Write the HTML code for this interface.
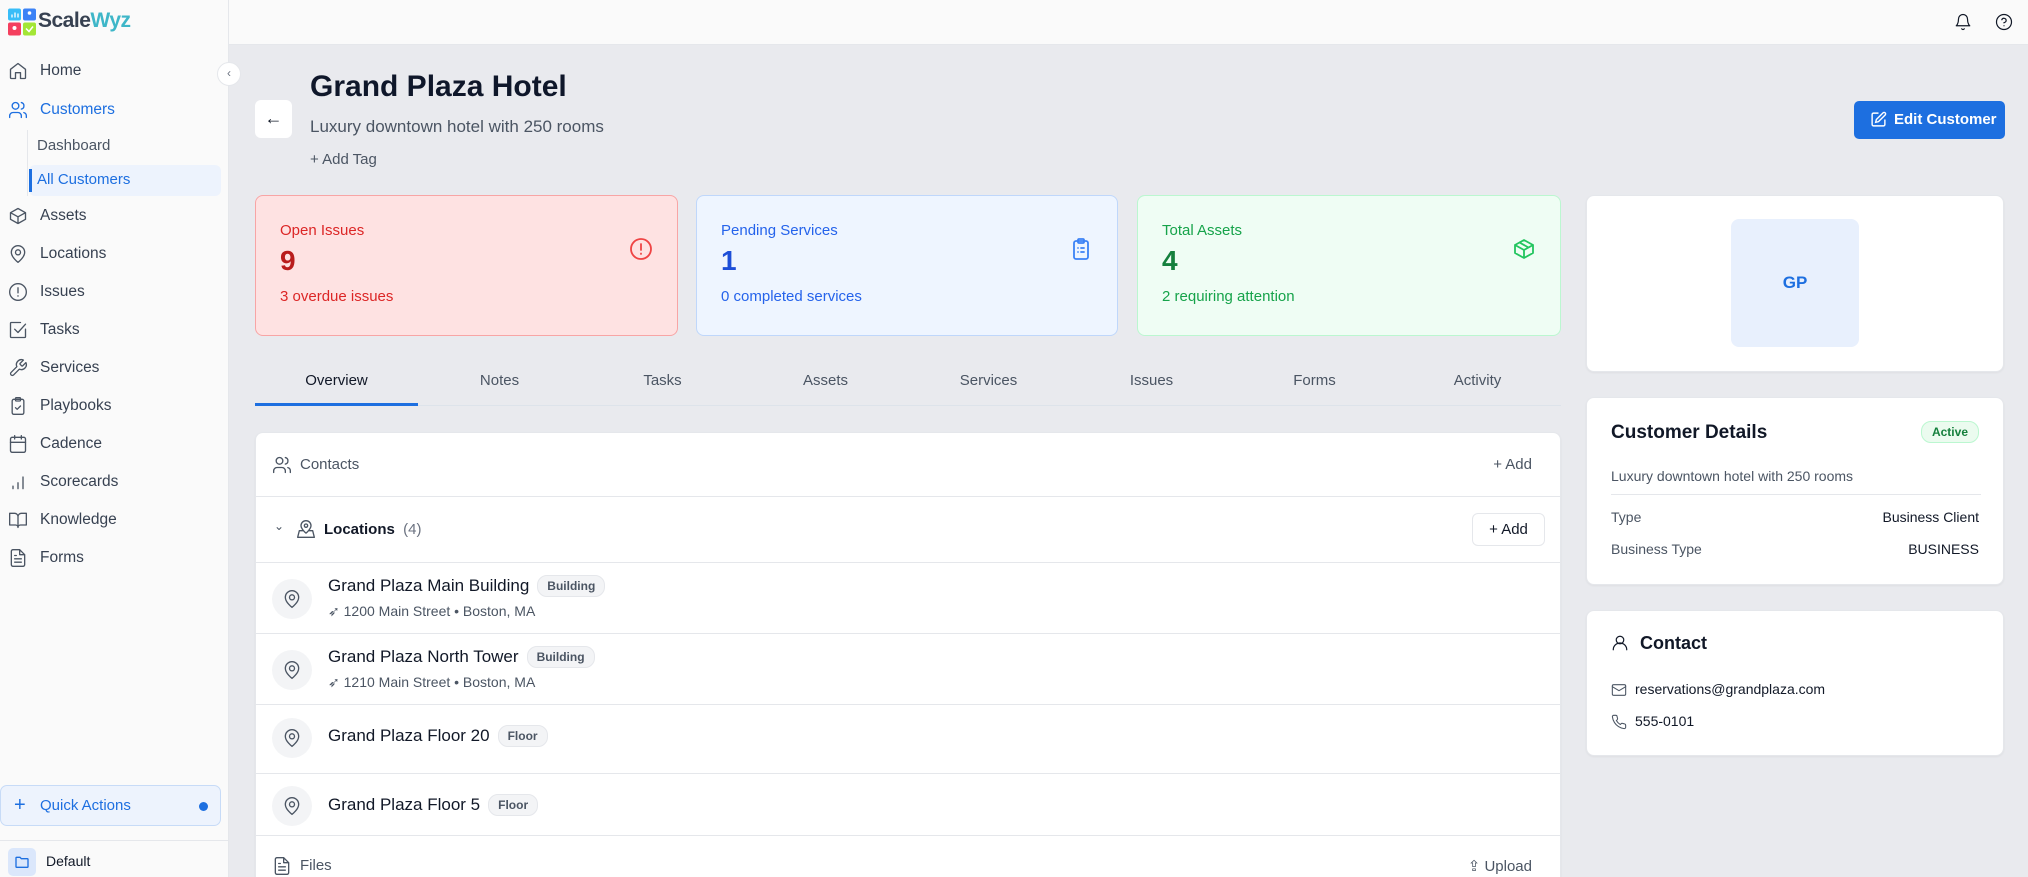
<!DOCTYPE html>
<html style="overflow:hidden;width:2028px;height:877px"><head><meta charset="utf-8"><style>
*{box-sizing:border-box;margin:0;padding:0}
body{width:2028px;height:877px;overflow:hidden;background:#e9eaee;font-family:"Liberation Sans",sans-serif;position:relative;color:#111827}
.a{position:absolute}
.sb{left:0;top:0;width:229px;height:877px;background:#fafafa;border-right:1px solid #e5e7eb}
.nav{position:absolute;left:8px;display:flex;align-items:center;font-size:15.5px;color:#374151}
.nav svg{width:20px;height:20px;margin-right:12px;stroke:#4b5563;fill:none;stroke-width:1.6;stroke-linecap:round;stroke-linejoin:round}
.top{left:229px;top:0;right:0;height:45px;background:#fafafa;border-bottom:1px solid #e5e7eb}
.card{position:absolute;background:#fff;border-radius:8px;border:1px solid #e5e7eb;box-shadow:0 1px 2px rgba(0,0,0,.05)}
.stat{position:absolute;top:195px;height:141px;border-radius:8px}
.stat .l{position:absolute;left:24px;top:26px;font-size:15px}
.stat .n{position:absolute;left:24px;top:49px;font-size:28px;font-weight:bold}
.stat .s{position:absolute;left:24px;top:92px;font-size:15px}
.stat svg{position:absolute;right:24px;top:41px;width:24px;height:24px;fill:none;stroke-width:1.8;stroke-linecap:round;stroke-linejoin:round}
.tab{position:absolute;top:372px;width:163px;text-align:center;font-size:15px;color:#4b5563}
.row{position:absolute;left:0;right:0;border-top:1px solid #e5e7eb}
.pin{position:absolute;left:16px;width:40px;height:40px;border-radius:50%;background:#f3f4f6}
.pin svg{position:absolute;left:10px;top:10px;width:20px;height:20px;fill:none;stroke:#4b5563;stroke-width:1.6}
.nm{position:absolute;left:72px;font-size:17px;color:#111827;display:flex;align-items:center}
.bd{margin-left:8px;font-size:12px;font-weight:bold;color:#4b5563;background:#f3f4f6;border:1px solid #e5e7eb;border-radius:10px;padding:3px 9px}
.ad{position:absolute;left:72px;font-size:14px;color:#4b5563}
.ic{fill:none;stroke:#4b5563;stroke-width:1.6;stroke-linecap:round;stroke-linejoin:round}
</style></head><body>
<div class="a sb">
  <svg class="a" style="left:8px;top:8px" width="28" height="28" viewBox="0 0 28 27"><rect x="0" y="0" width="13" height="12" rx="2" fill="#38bdf8"/><rect x="15" y="0" width="13" height="12" rx="2" fill="#3b82f6"/><rect x="0" y="14" width="13" height="13" rx="2" fill="#f43f5e"/><rect x="15" y="14" width="13" height="13" rx="2" fill="#a3e635"/><path d="M4 9V6M7 9V4M10 9V5" stroke="#fff" stroke-width="1.3"/><circle cx="21.5" cy="4.5" r="1.8" fill="#fff"/><circle cx="6.5" cy="19.5" r="2" fill="#fff"/><path d="M18 20l3 3 4-5" stroke="#fff" stroke-width="1.5" fill="none"/></svg>
  <div class="a" style="left:38px;top:9px;font-size:21px;font-weight:bold;letter-spacing:-.5px"><span style="color:#374151">Scale</span><span style="color:#3eb6c8">Wyz</span></div>
  <div class="nav" style="top:61px"><svg viewBox="0 0 24 24"><path d="M3 10l9-7 9 7v10a1 1 0 0 1-1 1h-5v-7H9v7H4a1 1 0 0 1-1-1z"/></svg>Home</div>
  <div class="nav" style="top:100px;color:#1d6fe0"><svg viewBox="0 0 24 24" style="stroke:#1d6fe0"><circle cx="9" cy="7" r="4"/><path d="M2 21v-2a4 4 0 0 1 4-4h6a4 4 0 0 1 4 4v2M16 3.1a4 4 0 0 1 0 7.8M22 21v-2a4 4 0 0 0-3-3.9"/></svg>Customers</div>
  <div class="a" style="left:27px;top:130px;width:1px;height:66px;background:#e5e7eb"></div>
  <div class="a" style="left:37px;top:137px;font-size:15px;color:#4b5563">Dashboard</div>
  <div class="a" style="left:29px;top:165px;width:192px;height:31px;background:#edf3fd;border-radius:6px"></div>
  <div class="a" style="left:29px;top:169px;width:3px;height:23px;background:#1d6fe0"></div>
  <div class="a" style="left:37px;top:171px;font-size:15px;color:#1d6fe0">All Customers</div>
  <div class="nav" style="top:206px"><svg viewBox="0 0 24 24"><path d="M21 8l-9-5-9 5v8l9 5 9-5zM3 8l9 5 9-5M12 13v8"/></svg>Assets</div>
  <div class="nav" style="top:244px"><svg viewBox="0 0 24 24"><path d="M20 10c0 6-8 12-8 12s-8-6-8-12a8 8 0 0 1 16 0z"/><circle cx="12" cy="10" r="3"/></svg>Locations</div>
  <div class="nav" style="top:282px"><svg viewBox="0 0 24 24"><circle cx="12" cy="12" r="10"/><path d="M12 7v6M12 16.5v.5"/></svg>Issues</div>
  <div class="nav" style="top:320px"><svg viewBox="0 0 24 24"><path d="M21 11v9a1 1 0 0 1-1 1H4a1 1 0 0 1-1-1V4a1 1 0 0 1 1-1h11M8 11l4 4 9-10"/></svg>Tasks</div>
  <div class="nav" style="top:358px"><svg viewBox="0 0 24 24"><path d="M14.7 6.3a1 1 0 0 0 0 1.4l1.6 1.6a1 1 0 0 0 1.4 0l3.8-3.8a6 6 0 0 1-7.9 7.900l-6.9 6.9a2.1 2.1 0 0 1-3-3l6.9-6.9a6 6 0 0 1 7.9-7.9z"/></svg>Services</div>
  <div class="nav" style="top:396px"><svg viewBox="0 0 24 24"><rect x="5" y="4" width="14" height="18" rx="2"/><rect x="9" y="2" width="6" height="4" rx="1"/><path d="M9 14l2 2 4-4"/></svg>Playbooks</div>
  <div class="nav" style="top:434px"><svg viewBox="0 0 24 24"><rect x="3" y="4" width="18" height="18" rx="2"/><path d="M8 2v4M16 2v4M3 10h18"/></svg>Cadence</div>
  <div class="nav" style="top:472px"><svg viewBox="0 0 24 24"><path d="M6 20v-3M12 20v-7M18 20V6"/></svg>Scorecards</div>
  <div class="nav" style="top:510px"><svg viewBox="0 0 24 24"><path d="M2 4h6a4 4 0 0 1 4 4v13a3 3 0 0 0-3-3H2zM22 4h-6a4 4 0 0 0-4 4v13a3 3 0 0 1 3-3h7z"/></svg>Knowledge</div>
  <div class="nav" style="top:548px"><svg viewBox="0 0 24 24"><path d="M14 2H6a2 2 0 0 0-2 2v16a2 2 0 0 0 2 2h12a2 2 0 0 0 2-2V8zM14 2v6h6M8 13h8M8 17h8M8 9h2"/></svg>Forms</div>
  <div class="a" style="left:0;top:785px;width:221px;height:41px;background:#edf3fd;border:1px solid #c7dbf7;border-radius:7px"></div>
  <div class="a" style="left:14px;top:794px;font-size:20px;color:#1d6fe0">+</div>
  <div class="a" style="left:40px;top:797px;font-size:15px;color:#1d6fe0">Quick Actions</div>
  <div class="a" style="left:199px;top:802px;width:9px;height:9px;border-radius:50%;background:#1d6fe0"></div>
  <div class="a" style="left:0;top:840px;width:229px;height:1px;background:#e5e7eb"></div>
  <div class="a" style="left:8px;top:848px;width:28px;height:28px;border-radius:5px;background:#dbe7fb"></div>
  <svg class="a" style="left:14px;top:854px" width="16" height="16" viewBox="0 0 24 24"><path d="M3 6a1 1 0 0 1 1-1h5l2 2h9a1 1 0 0 1 1 1v11a1 1 0 0 1-1 1H4a1 1 0 0 1-1-1z" fill="none" stroke="#1d6fe0" stroke-width="2"/></svg>
  <div class="a" style="left:46px;top:853px;font-size:14px;color:#111827">Default</div>
</div>
<div class="a" style="left:217px;top:62px;width:24px;height:24px;border-radius:50%;background:#fff;border:1px solid #e5e7eb;text-align:center;font-size:12px;line-height:21px;color:#6b7280">‹</div>
<div class="a top"></div>
<svg class="a ic" style="left:1954px;top:13px;stroke:#111827" width="18" height="18" viewBox="0 0 24 24"><path d="M6 8a6 6 0 0 1 12 0c0 7 3 9 3 9H3s3-2 3-9M10.3 21a1.9 1.9 0 0 0 3.4 0"/></svg>
<svg class="a ic" style="left:1995px;top:13px;stroke:#111827" width="18" height="18" viewBox="0 0 24 24"><circle cx="12" cy="12" r="10"/><path d="M9.1 9a3 3 0 0 1 5.8 1c0 2-3 3-3 3M12 17h.01"/></svg>

<div class="a" style="left:255px;top:100px;width:37px;height:38px;background:#fff;border-radius:6px;text-align:center;line-height:36px;font-size:18px">←</div>
<div class="a" style="left:310px;top:70px;font-size:30px;font-weight:bold;color:#0f172a">Grand Plaza Hotel</div>
<div class="a" style="left:310px;top:117px;font-size:17px;color:#4b5563">Luxury downtown hotel with 250 rooms</div>
<div class="a" style="left:310px;top:151px;font-size:15px;color:#4b5563">+ Add Tag</div>
<div class="a" style="left:1854px;top:101px;width:151px;height:38px;background:#1d6fe0;border-radius:5px;color:#fff;font-size:15px;font-weight:bold;line-height:38px;padding-left:40px">Edit Customer</div>
<svg class="a" style="left:1870px;top:111px" width="17" height="17" viewBox="0 0 24 24" fill="none" stroke="#fff" stroke-width="2"><path d="M12 3H5a2 2 0 0 0-2 2v14a2 2 0 0 0 2 2h14a2 2 0 0 0 2-2v-7M18.4 2.6a2.1 2.1 0 0 1 3 3L12 15l-4 1 1-4z"/></svg>

<div class="stat" style="left:255px;width:423px;background:#fee2e2;border:1px solid #f8a5a5"><div class="l" style="color:#dc2626">Open Issues</div><div class="n" style="color:#b91c1c">9</div><div class="s" style="color:#dc2626">3 overdue issues</div><svg viewBox="0 0 24 24" style="stroke:#ef4444"><circle cx="12" cy="12" r="10"/><path d="M12 7v6M12 16.5v.5"/></svg></div>
<div class="stat" style="left:696px;width:422px;background:#eef5ff;border:1px solid #bfd7fb"><div class="l" style="color:#2563eb">Pending Services</div><div class="n" style="color:#1d4ed8">1</div><div class="s" style="color:#2563eb">0 completed services</div><svg viewBox="0 0 24 24" style="stroke:#3b82f6"><rect x="5" y="4" width="14" height="18" rx="2"/><rect x="9" y="2" width="6" height="4" rx="1"/><path d="M9 11h.01M12 11h3M9 15h.01M12 15h3"/></svg></div>
<div class="stat" style="left:1137px;width:424px;background:#effdf4;border:1px solid #bbf7d0"><div class="l" style="color:#16a34a">Total Assets</div><div class="n" style="color:#15803d">4</div><div class="s" style="color:#16a34a">2 requiring attention</div><svg viewBox="0 0 24 24" style="stroke:#22c55e"><path d="M21 8l-9-5-9 5v8l9 5 9-5zM3 8l9 5 9-5M12 13v8M7.5 5.5l9 5"/></svg></div>

<div class="tab" style="left:255px;color:#111827">Overview</div>
<div class="tab" style="left:418px">Notes</div>
<div class="tab" style="left:581px">Tasks</div>
<div class="tab" style="left:744px">Assets</div>
<div class="tab" style="left:907px">Services</div>
<div class="tab" style="left:1070px">Issues</div>
<div class="tab" style="left:1233px">Forms</div>
<div class="tab" style="left:1396px">Activity</div>
<div class="a" style="left:255px;top:405px;width:1306px;height:1px;background:#dde3ea"></div>
<div class="a" style="left:255px;top:403px;width:163px;height:3px;background:#1d6fe0"></div>

<div class="card" style="left:255px;top:432px;width:1306px;height:445px;border-bottom:none;border-radius:8px 8px 0 0">
  <svg class="a ic" style="left:16px;top:22px" width="20" height="20" viewBox="0 0 24 24"><circle cx="9" cy="7" r="4"/><path d="M2 21v-2a4 4 0 0 1 4-4h6a4 4 0 0 1 4 4v2M16 3.1a4 4 0 0 1 0 7.8M22 21v-2a4 4 0 0 0-3-3.9"/></svg>
  <div class="a" style="left:44px;top:23px;font-size:15px;color:#4b5563">Contacts</div>
  <div class="a" style="right:28px;top:23px;font-size:15px;color:#4b5563">+ Add</div>
  <div class="row" style="top:63px;height:66px">
    <div class="a" style="left:18px;top:22px;font-size:12px;color:#4b5563">⌄</div>
    <svg class="a ic" style="left:40px;top:22px" width="20" height="20" viewBox="0 0 24 24"><path d="M18 8c0 4-6 9-6 9s-6-5-6-9a6 6 0 0 1 12 0z"/><circle cx="12" cy="8" r="2"/><path d="M8 14H4l-2 8h20l-2-8h-4"/></svg>
    <div class="a" style="left:68px;top:24px;font-size:15px;font-weight:bold;color:#111827">Locations <span style="font-weight:normal;color:#6b7280">&nbsp;(4)</span></div>
    <div class="a" style="left:1216px;top:16px;width:73px;height:33px;border:1px solid #e5e7eb;border-radius:6px;text-align:center;line-height:31px;font-size:15px">+ Add</div>
  </div>
  <div class="row" style="top:129px;height:71px"><div class="pin" style="top:16px"><svg viewBox="0 0 24 24"><path d="M20 10c0 6-8 12-8 12s-8-6-8-12a8 8 0 0 1 16 0z"/><circle cx="12" cy="10" r="3"/></svg></div><div class="nm" style="top:12px">Grand Plaza Main Building<span class="bd">Building</span></div><div class="ad" style="top:40px">➶ 1200 Main Street • Boston, MA</div></div>
  <div class="row" style="top:200px;height:71px"><div class="pin" style="top:16px"><svg viewBox="0 0 24 24"><path d="M20 10c0 6-8 12-8 12s-8-6-8-12a8 8 0 0 1 16 0z"/><circle cx="12" cy="10" r="3"/></svg></div><div class="nm" style="top:12px">Grand Plaza North Tower<span class="bd">Building</span></div><div class="ad" style="top:40px">➶ 1210 Main Street • Boston, MA</div></div>
  <div class="row" style="top:271px;height:69px"><div class="pin" style="top:13px"><svg viewBox="0 0 24 24"><path d="M20 10c0 6-8 12-8 12s-8-6-8-12a8 8 0 0 1 16 0z"/><circle cx="12" cy="10" r="3"/></svg></div><div class="nm" style="top:20px">Grand Plaza Floor 20<span class="bd">Floor</span></div></div>
  <div class="row" style="top:340px;height:62px"><div class="pin" style="top:12px"><svg viewBox="0 0 24 24"><path d="M20 10c0 6-8 12-8 12s-8-6-8-12a8 8 0 0 1 16 0z"/><circle cx="12" cy="10" r="3"/></svg></div><div class="nm" style="top:20px">Grand Plaza Floor 5<span class="bd">Floor</span></div></div>
  <div class="row" style="top:402px;height:43px">
    <svg class="a ic" style="left:16px;top:20px" width="20" height="20" viewBox="0 0 24 24"><path d="M14 2H6a2 2 0 0 0-2 2v16a2 2 0 0 0 2 2h12a2 2 0 0 0 2-2V8zM14 2v6h6M8 13h8M8 17h8M8 9h2"/></svg>
    <div class="a" style="left:44px;top:21px;font-size:15px;color:#4b5563">Files</div>
    <div class="a" style="right:28px;top:21px;font-size:15px;color:#4b5563">⇪ Upload</div>
  </div>
</div>

<div class="card" style="left:1586px;top:195px;width:418px;height:177px">
  <div class="a" style="left:144px;top:23px;width:128px;height:128px;background:#e8f0fd;border-radius:8px;text-align:center;line-height:128px;color:#1d6fe0;font-weight:bold;font-size:17px">GP</div>
</div>
<div class="card" style="left:1586px;top:397px;width:418px;height:188px">
  <div class="a" style="left:24px;top:24px;font-size:19px;font-weight:bold">Customer Details</div>
  <div class="a" style="right:24px;top:23px;font-size:12px;font-weight:bold;color:#15803d;background:#ebfbef;border:1px solid #bbf7d0;border-radius:10px;padding:3px 10px">Active</div>
  <div class="a" style="left:24px;top:70px;font-size:14px;color:#4b5563">Luxury downtown hotel with 250 rooms</div>
  <div class="a" style="left:24px;top:96px;width:370px;height:1px;background:#e5e7eb"></div>
  <div class="a" style="left:24px;top:111px;font-size:14px;color:#4b5563">Type</div>
  <div class="a" style="right:24px;top:111px;font-size:14px">Business Client</div>
  <div class="a" style="left:24px;top:143px;font-size:14px;color:#4b5563">Business Type</div>
  <div class="a" style="right:24px;top:143px;font-size:14px">BUSINESS</div>
</div>
<div class="card" style="left:1586px;top:610px;width:418px;height:146px">
  <svg class="a ic" style="left:24px;top:23px;stroke:#111827" width="18" height="18" viewBox="0 0 24 24"><circle cx="12" cy="8" r="5"/><path d="M3 21a9 9 0 0 1 18 0"/></svg>
  <div class="a" style="left:53px;top:22px;font-size:18px;font-weight:bold">Contact</div>
  <svg class="a ic" style="left:24px;top:71px" width="16" height="16" viewBox="0 0 24 24"><rect x="2" y="4" width="20" height="16" rx="2"/><path d="M22 7l-10 6L2 7"/></svg>
  <div class="a" style="left:48px;top:70px;font-size:14px">reservations@grandplaza.com</div>
  <svg class="a ic" style="left:24px;top:103px" width="16" height="16" viewBox="0 0 24 24"><path d="M22 16.9v3a2 2 0 0 1-2.2 2 19.8 19.8 0 0 1-8.6-3.1 19.5 19.5 0 0 1-6-6A19.8 19.8 0 0 1 2.1 4.2 2 2 0 0 1 4.1 2h3a2 2 0 0 1 2 1.7c.1 1 .4 1.9.7 2.8a2 2 0 0 1-.5 2.1L8 9.8a16 16 0 0 0 6 6l1.3-1.3a2 2 0 0 1 2.1-.4c.9.3 1.800.6 2.8.7a2 2 0 0 1 1.7 2z"/></svg>
  <div class="a" style="left:48px;top:102px;font-size:14px">555-0101</div>
</div>
</body></html>
